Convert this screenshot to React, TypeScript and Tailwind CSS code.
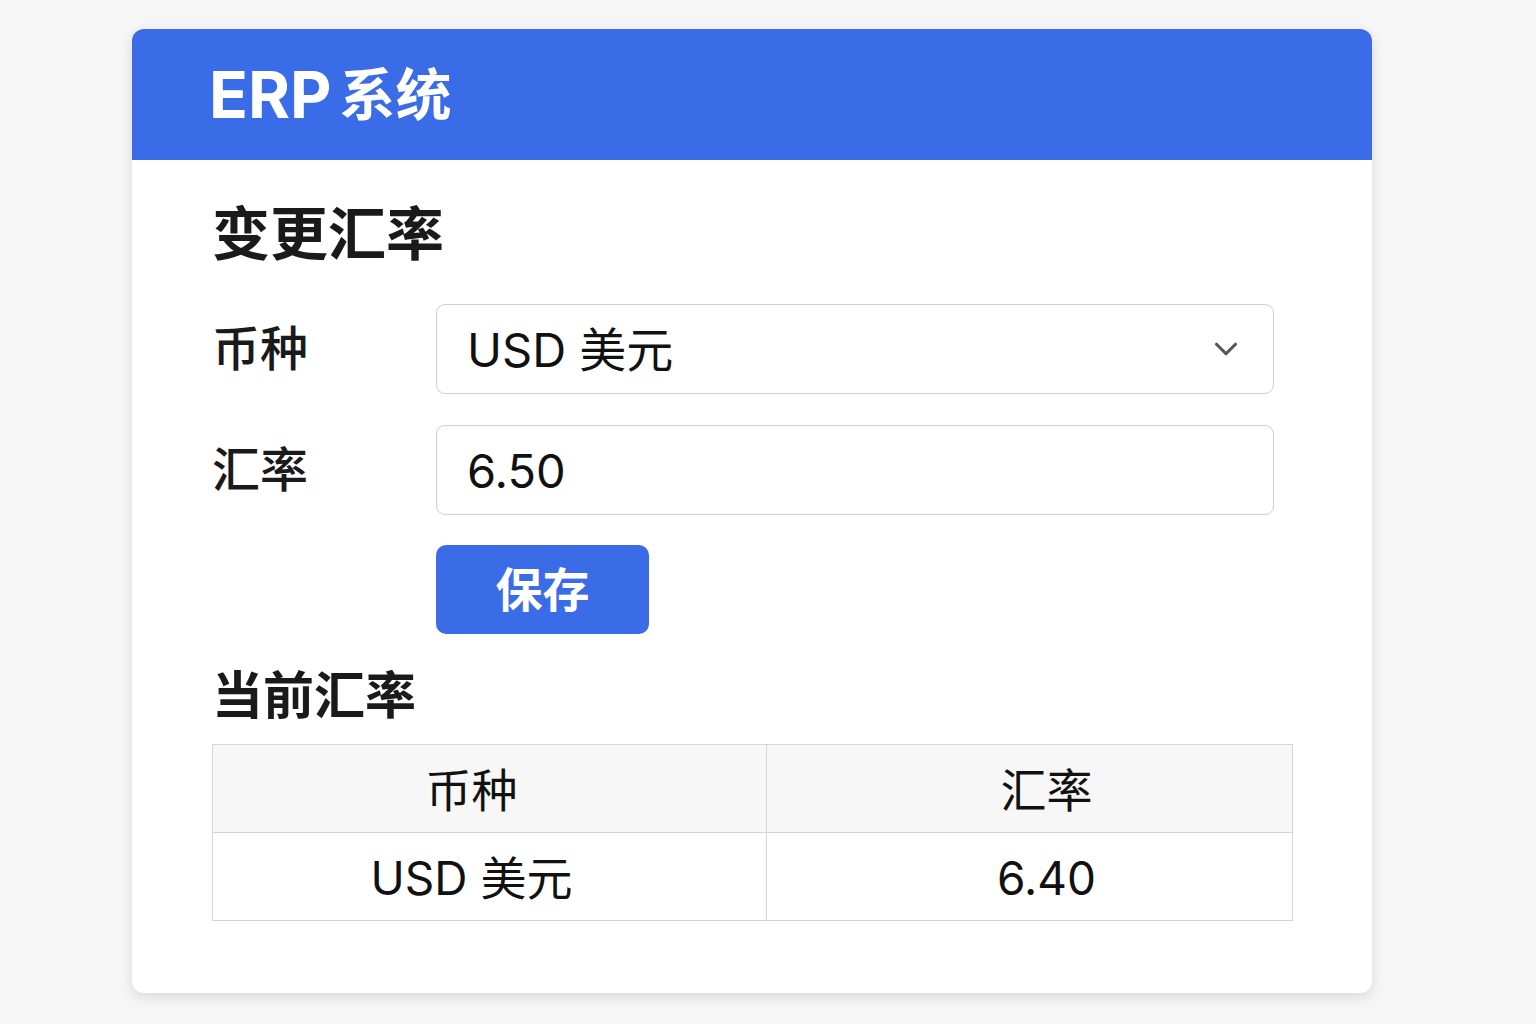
import { ChevronDown } from 'lucide-react'

const font = { fontFamily: 'Inter, "Noto Sans CJK SC", sans-serif' }

export default function App() {
  return (
    <div className="min-h-screen bg-[#f6f6f6] pt-[29px] pl-[132px]" style={font}>
      <div className="w-[1240px] overflow-hidden rounded-[12px] bg-white shadow-[0_4px_14px_rgba(0,0,0,0.12)]">
        <header className="flex h-[131px] items-center bg-[#3b6ce7] pl-[77px]">
          <h1 className="flex items-center text-[64px] leading-none font-bold text-white">
            ERP<span className="ml-[8px] text-[56px]">系统</span>
          </h1>
        </header>
        <div className="px-[80px] pt-[44px] pb-[72px]">
          <h2 className="text-[58px] leading-[60px] font-bold text-[#1a1a1a]">变更汇率</h2>
          <div className="mt-[40px] space-y-[31px]">
            <div className="flex items-center">
              <label className="w-[224px] text-[48px] leading-none font-medium text-[#1a1a1a]">币种</label>
              <div className="flex h-[90px] w-[838px] items-center justify-between rounded-[9px] border border-[#cfcfcf] pr-[28px] pl-[30px]">
                <span className="text-[47px] leading-none text-[#111]">USD 美元</span>
                <ChevronDown className="h-[38px] w-[38px] text-[#555]" strokeWidth={2} />
              </div>
            </div>
            <div className="flex items-center">
              <label className="w-[224px] text-[48px] leading-none font-medium text-[#1a1a1a]">汇率</label>
              <input
                defaultValue="6.50"
                className="h-[90px] w-[838px] rounded-[9px] border border-[#cfcfcf] pl-[30px] text-[47px] text-[#111] outline-none"
              />
            </div>
          </div>
          <div className="mt-[30px] pl-[224px]">
            <button
              type="button"
              className="h-[89px] w-[213px] rounded-[10px] bg-[#3b6ce7] text-[47px] leading-none font-bold text-white"
            >
              保存
            </button>
          </div>
          <h2 className="mt-[32px] text-[51px] leading-[60px] font-bold text-[#1a1a1a]">当前汇率</h2>
          <table className="mt-[18px] w-[1081px] border-collapse text-[46px] text-[#111]">
            <thead>
              <tr className="h-[88px] bg-[#f7f7f7]">
                <th className="w-[554px] border border-[#d4d4d4] pt-[4px] pr-[36px] font-normal">币种</th>
                <th className="border border-[#d4d4d4] pt-[4px] pl-[34px] font-normal">汇率</th>
              </tr>
            </thead>
            <tbody>
              <tr className="h-[88px]">
                <td className="border border-[#d4d4d4] pt-[4px] pr-[36px] text-center">USD 美元</td>
                <td className="border border-[#d4d4d4] pt-[4px] pl-[34px] text-center">6.40</td>
              </tr>
            </tbody>
          </table>
        </div>
      </div>
    </div>
  )
}
